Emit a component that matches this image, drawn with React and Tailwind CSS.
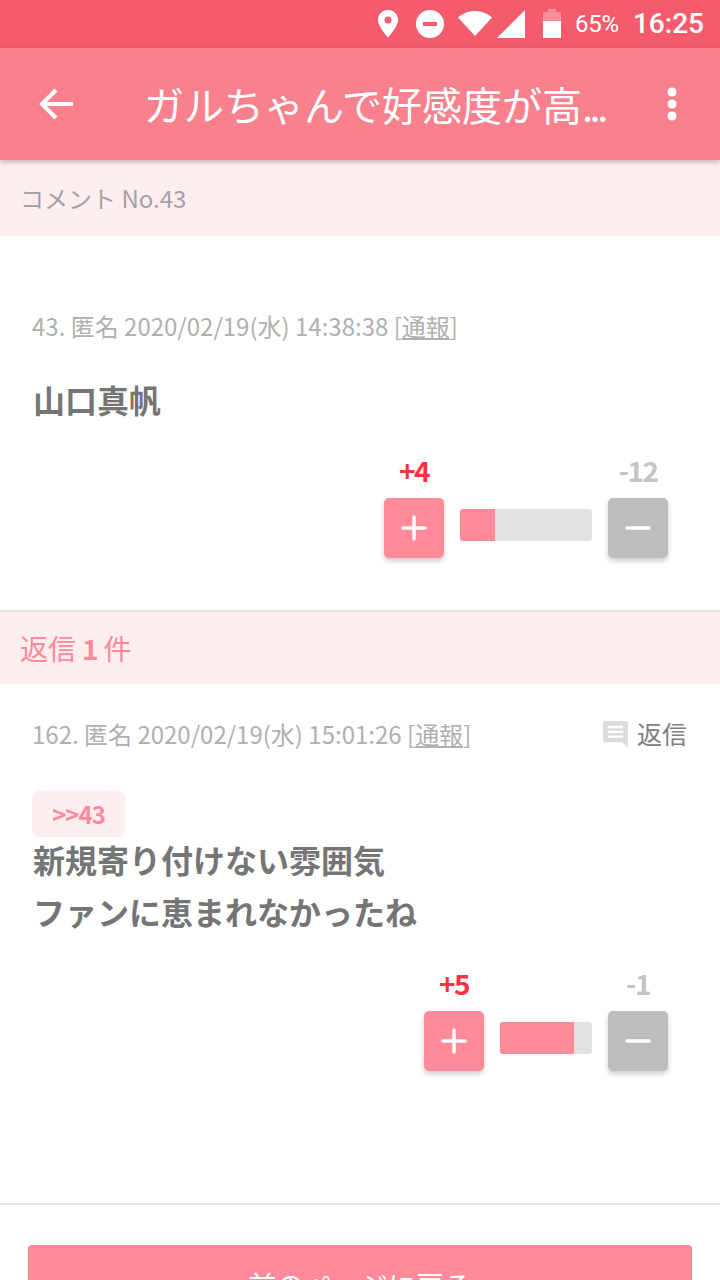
import React from "react";

const cjk = "font-['Noto_Sans_CJK_JP',sans-serif]";

function StatusBar() {
  return (
    <div className="h-12 bg-[#f45c6e] flex items-center justify-end pr-4 text-white">
      <svg width="24" height="30" viewBox="0 0 24 30" className="mr-[15px]">
        <path fill="#fff" fillRule="evenodd" d="M12 1C6.200 1 2 5.400 2 11c0 6.600 10 17.500 10 17.500S22 17.600 22 11C22 5.400 17.800 1 12 1zm0 6.500a3.500 3.500 0 1 1 0 7 3.500 3.500 0 0 1 0-7z" />
      </svg>
      <svg width="30" height="30" viewBox="0 0 30 30" className="mr-[12px]">
        <path fill="#fff" fillRule="evenodd" d="M15 1a14 14 0 1 0 0 28 14 14 0 0 0 0-28zM8 13h14v4H8z" />
      </svg>
      <svg width="36" height="30" viewBox="0 0 36 30" className="mr-[3px]">
        <path fill="#fff" d="M18 27 1 8.500C5.500 4.500 11.500 2 18 2s12.500 2.500 17 6.500z" />
      </svg>
      <svg width="30" height="30" viewBox="0 0 30 30" className="mr-[16px]">
        <path fill="#fff" d="M29 1v28H1z" />
      </svg>
      <svg width="20" height="30" viewBox="0 0 20 30" className="mr-[13px]">
        <path fill="#fff" fillOpacity="0.3" d="M6 0h8v3h5v9H1V3h5z" />
        <path fill="#fff" d="M1 12h18v17H1z" />
      </svg>
      <span className="text-[24px] font-['Roboto',sans-serif] mr-[14px] leading-none tracking-[-0.200px]">65%</span>
      <span className="text-[28px] font-medium font-['Roboto',sans-serif] leading-none">16:25</span>
    </div>
  );
}

function AppBar() {
  return (
    <div className="relative z-10 h-[112px] bg-[#f9818e] flex items-center shadow-[0_2px_5px_rgba(0,0,0,0.25)] text-white">
      <svg width="48" height="48" viewBox="0 0 48 48" className="ml-[33px]">
        <path fill="none" stroke="#fff" strokeWidth="4" d="M40 24H10M23 10 9 24l14 14" />
      </svg>
      <div className={`ml-[63px] w-[471px] text-[40px] leading-none whitespace-nowrap ${cjk}`}>
        ガルちゃんで好感度が高<span className="tracking-[-3.500px]">...</span>
      </div>
      <svg width="12" height="36" viewBox="0 0 12 36" className="ml-[51px]">
        <circle cx="6" cy="6" r="4.500" fill="#fff" />
        <circle cx="6" cy="18" r="4.500" fill="#fff" />
        <circle cx="6" cy="30" r="4.500" fill="#fff" />
      </svg>
    </div>
  );
}

function VoteBar({ plus, minus, barWidth, fill }) {
  return (
    <div className="flex justify-end pr-[52px]">
      <div className="flex flex-col">
        <div className="flex items-center h-[40px]">
          <div className="w-[60px] text-center text-[28px] font-bold text-[#ff3046] tracking-[-1.500px]">{plus}</div>
          <div style={{ width: barWidth + 32 }} />
          <div className="w-[60px] text-center text-[28px] font-bold text-[#c4c4c4] tracking-[-1.500px]">{minus}</div>
        </div>
        <div className="flex items-start mt-[8px]">
          <div className="w-[60px] h-[60px] rounded-[5px] bg-[#ff8a99] shadow-[0_3px_5px_rgba(0,0,0,0.2)] flex items-center justify-center">
            <svg width="28" height="28" viewBox="0 0 28 28">
              <path stroke="#fff" strokeWidth="3.500" strokeLinecap="round" d="M14 3v22M3 14h22" />
            </svg>
          </div>
          <div className="mx-4 mt-[11px] h-[32px] bg-[#e2e2e2] rounded-[3px] overflow-hidden" style={{ width: barWidth }}>
            <div className="h-full bg-[#ff8a99]" style={{ width: fill }} />
          </div>
          <div className="w-[60px] h-[60px] rounded-[5px] bg-[#bdbdbd] shadow-[0_3px_5px_rgba(0,0,0,0.2)] flex items-center justify-center">
            <svg width="28" height="28" viewBox="0 0 28 28">
              <path stroke="#fff" strokeWidth="3.500" strokeLinecap="round" d="M3 14h22" />
            </svg>
          </div>
        </div>
      </div>
    </div>
  );
}

function Meta({ children }) {
  return (
    <span className="text-[24px] text-[#b0b0b0] leading-none whitespace-nowrap">
      {children} [<span className="underline">通報</span>]
    </span>
  );
}

export default function App() {
  return (
    <div className={`w-[720px] h-[1280px] overflow-hidden bg-white ${cjk}`}>
      <StatusBar />
      <AppBar />

      <div className="h-[76px] bg-[#ffeef0] flex items-center pl-[20px] text-[24px] text-[#a3a3a3]">
        コメント No.43
      </div>

      {/* comment body */}
      <div className="h-[376px] border-b-2 border-[#e6e6e6]">
        <div className="pl-[32px] pt-[78px] h-[114px]">
          <Meta>43. 匿名 2020/02/19(水) 14:38:38</Meta>
        </div>
        <div className="pl-[33px] mt-[27px] text-[32px] font-bold text-[#757575] leading-[44px]">山口真帆</div>
        <div className="mt-[29px]">
          <VoteBar plus="+4" minus="-12" barWidth={132} fill={35} />
        </div>
      </div>

      <div className="h-[72px] bg-[#ffeef0] flex items-center pl-[20px] text-[28px] text-[#ff8a99]">
        返信<span className="font-bold ml-[6px] mr-[5px]">1</span>件
      </div>

      {/* reply body */}
      <div className="h-[521px] border-b-2 border-[#e6e6e6]">
        <div className="flex items-center justify-between pl-[32px] pr-[33px] pt-[35px] h-[65px]">
          <Meta>162. 匿名 2020/02/19(水) 15:01:26</Meta>
          <div className="flex items-center gap-[9px]">
            <svg width="25" height="27" viewBox="0 0 26 28">
              <path fill="#dcdcdc" d="M2 0h22a2 2 0 0 1 2 2v26l-6-6H2a2 2 0 0 1-2-2V2a2 2 0 0 1 2-2z" />
              <path fill="#fff" d="M5 5h16v2.500H5zM5 10h16v2.500H5zM5 15h16v2.500H5z" />
            </svg>
            <span className="text-[25px] text-[#808080] leading-none -translate-y-px">返信</span>
          </div>
        </div>
        <div className="pl-[32px] mt-[41px]">
          <div className="inline-flex items-center justify-center w-[93px] h-[47px] rounded-[8px] bg-[#ffeef0] text-[24px] font-bold text-[#ff8a99] tracking-[-1px]">
            &gt;&gt;43
          </div>
          <div className="pl-px text-[32px] font-bold text-[#757575] leading-[52px] mt-[-4px]">
            <div>新規寄り付けない雰囲気</div>
            <div>ファンに恵まれなかったね</div>
          </div>
        </div>
        <div className="mt-[26px]">
          <VoteBar plus="+5" minus="-1" barWidth={92} fill={74} />
        </div>
      </div>

      <div className="mt-[40px] mx-[28px] h-[80px] rounded-[4px] bg-[#ff8a99] text-white text-[28px] flex justify-center pt-[26px] leading-none">
        前のページに戻る
      </div>
    </div>
  );
}
